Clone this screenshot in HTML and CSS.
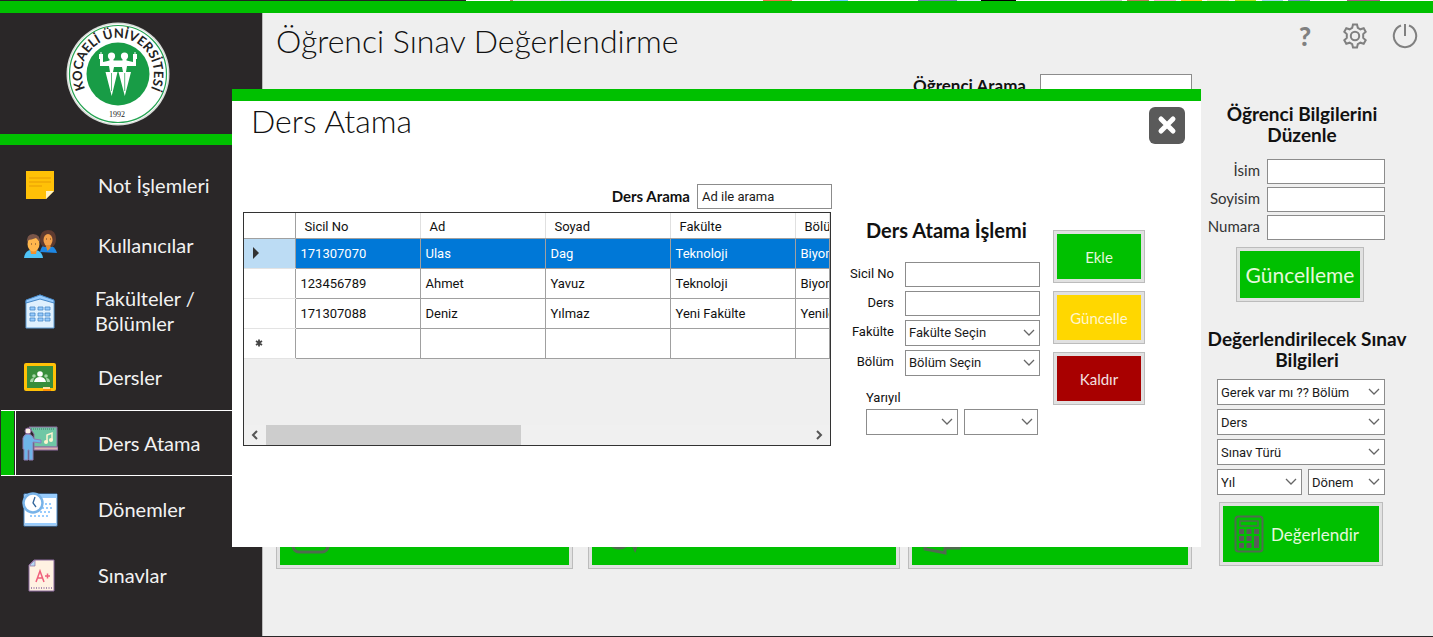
FILE: index.html
```html
<!DOCTYPE html>
<html lang="tr">
<head>
<meta charset="utf-8">
<title>Öğrenci Sınav Değerlendirme</title>
<link rel="stylesheet" href="styles.css">
</head>
<body>
<div class="desktop-edge"></div>
<div class="top-bar"></div>
<div class="app">
  <aside class="sidebar">
    <div class="brand">
      <svg class="logo" viewBox="0 0 104 104" role="img" aria-label="Kocaeli Üniversitesi">
        <defs><path id="ring" d="M22.500 72.500A36 36 0 1 1 81.500 72.500"/></defs>
        <circle cx="52" cy="52" r="51.500" fill="#d9ddd9"/>
        <circle cx="52" cy="52" r="50" fill="#fff"/>
        <circle cx="52" cy="52" r="48.500" fill="none" stroke="#25a352" stroke-width="1.200"/>
        <circle cx="52" cy="52" r="31.500" fill="#189c46"/>
        <text class="logo-name"><textPath href="#ring" startOffset="50%" text-anchor="middle">KOCAELİ ÜNİVERSİTESİ</textPath></text>
        <text class="logo-year" x="51" y="95" text-anchor="middle">1992</text>
        <g fill="#fff">
          <circle cx="45.500" cy="34" r="3.600"/><circle cx="58.500" cy="34" r="3.600"/>
          <path d="M34 36h3v4q4-1 6.500-1.500V36h4v2.500h9V36h4v2.500L67 40v-4h3v8h-9l-1 6h-3l-1-5h-8l-1 5h-3l-1-6H34z"/>
          <path d="M39.500 50h12l-5.800 24zM52.500 50H65l-6.200 24z"/>
          <path d="M33 32h4v5h-4zM67 32h4v5h-4zM34.500 30h1v3h-1zM68.500 30h1v3h-1z"/>
        </g>
        <path d="M45.500 51v18M58.700 51v18" stroke="#189c46" stroke-width=".7"/>
      </svg>
    </div>
    <nav class="menu">
      <a class="item first" href="#"><svg class="icon" viewBox="0 0 36 36"><path d="M4 4h28v20l-8 8H4z" fill="#ffc107"/><path d="M7 11h22M7 15h22M7 19h13" stroke="#e89b05" stroke-width="1.200"/><path d="M24 24h8l-8 8z" fill="#fff3c4"/></svg><span>Not İşlemleri</span></a>
      <a class="item" href="#"><svg class="icon" viewBox="0 0 36 36"><path d="M18 25q1-6 5-7h4q6 1 8 8z" fill="#1e88e5"/><path d="M18 13Q18 3 26 3t8 9q0 6-4 8h-8q-4-2-4-7z" fill="#5d3a30"/><ellipse cx="26" cy="13" rx="4.500" ry="6" fill="#f2a04b"/><path d="M23.500 18h5v3l-3 3z" fill="#e08c35"/><path d="M2 31q1-7 6-8h6q6 1 7 8z" fill="#4fc3f7"/><path d="M8 22h7l-1 5h-5z" fill="#f2912d"/><ellipse cx="11.500" cy="17" rx="6" ry="7.500" fill="#ffb74d"/><path d="M5 17q-1-10 6-10 8 0 7 10-1-4-4-6-5 2-8 2z" fill="#795548"/><path d="M9 17h1M13 17h1M24 12h1M28 12h1" stroke="#614030"/></svg><span>Kullanıcılar</span></a>
      <a class="item two-line" href="#"><svg class="icon" viewBox="0 0 36 36"><path d="M4 8l14-6 14 6v27H4z" fill="#dff0fe" stroke="#5e9ed6"/><path d="M4 7l14-5 14 5v3L18 6 4 10z" fill="#98ccfd" stroke="#4788c7"/><path d="M8 14h5v3H8zM16 14h5v3h-5zM23 14h5v3h-5zM8 20h5v3H8zM16 20h5v3h-5zM23 20h5v3h-5zM8 25h5v3H8zM16 25h5v3h-5zM23 25h5v3h-5z" fill="#98ccfd" stroke="#4788c7" stroke-width=".8"/></svg><span>Fakülteler /<br>Bölümler</span></a>
      <a class="item" href="#"><svg class="icon" viewBox="0 0 36 36"><rect x="2" y="4" width="32" height="28" rx="2" fill="#ffc107"/><path d="M5 7h26v22H5z" fill="#388e3c"/><circle cx="18" cy="15" r="2.800" fill="#fff"/><path d="M12 23q1-5 6-5t6 5z" fill="#fff"/><circle cx="12" cy="17" r="1.800" fill="#a5d6a7"/><circle cx="24" cy="17" r="1.800" fill="#a5d6a7"/><path d="M8 23q0-4 4-4l-1 4zM28 23q0-4-4-4l1 4z" fill="#a5d6a7"/><path d="M21 28h7v2h-7z" fill="#ffe0a0"/><path d="M21 30h8v2h-8z" fill="#ff8f00"/></svg><span>Dersler</span></a>
      <a class="item active" href="#"><svg class="icon" viewBox="0 0 36 36"><path d="M7 2h28v20H12V9z" fill="#6fc7a5" stroke="#8d6c9f"/><path d="M9 4h24" stroke="#42756b" stroke-dasharray="1 1"/><path d="M12 22h24v3H12z" fill="#dbb1b1" stroke="#8d6c9f"/><path d="M25 17v-7l5-2v7" fill="none" stroke="#fff5d0" stroke-width="1.500"/><circle cx="24" cy="17" r="2" fill="#fff5d0"/><circle cx="29" cy="15" r="2" fill="#fff5d0"/><circle cx="6" cy="6" r="3" fill="#fdf1e5" stroke="#8d6c9f"/><path d="M1 13q1-4 5-4 4 0 6 5l7 1v3l-8-1v18H7V25H6v10H2V24H1z" fill="#6eb5e8" stroke="#8d7fb5"/></svg><span>Ders Atama</span></a>
      <a class="item" href="#"><svg class="icon" viewBox="0 0 36 36"><path d="M2 3h33v32H2z" fill="#fff" stroke="#4788c7"/><path d="M3 3h32v4H3zM3 32h31v2H3z" fill="#98ccfd"/><path d="M8 25h18M18 21h12M20 17h10M23 13h7" stroke="#98ccfd" stroke-width="2" stroke-dasharray="2 2"/><circle cx="11" cy="12" r="9.500" fill="#fff" stroke="#78b3e8" stroke-width="2.500"/><path d="M13 6l-2 6 3 4" fill="none" stroke="#31659a" stroke-width="1.300"/></svg><span>Dönemler</span></a>
      <a class="item" href="#"><svg class="icon" viewBox="0 0 36 36"><path d="M12 3h20v31H7V8z" fill="#fff2e2" stroke="#8d6c9f"/><path d="M8 8l5-5v6H8z" fill="#b5d8f2" stroke="#8d6c9f" stroke-width=".7"/><path d="M14 25l4-11 4 11M15 21h6M23 19h5M25.500 16.500v5" fill="none" stroke="#f0607c" stroke-width="1.500"/><path d="M9 31h22" stroke="#8d6c9f" stroke-width="1.500" stroke-dasharray="1 1.500"/></svg><span>Sınavlar</span></a>
    </nav>
  </aside>

  <main class="main">
    <header class="page-head">
      <h1 class="title">Öğrenci Sınav Değerlendirme</h1>
      <div class="tools">
        <button class="tool help" type="button">?</button>
        <button class="tool" type="button" aria-label="Ayarlar"><svg viewBox="0 0 26 26"><path d="M11 1.500h4l.8 3.300 2.600 1.500 3.300-1 2 3.500-2.500 2.300v3.800l2.500 2.300-2 3.500-3.300-1-2.600 1.500-.8 3.300h-4l-.8-3.300-2.600-1.500-3.300 1-2-3.500 2.500-2.300v-3.800L2.300 8.800l2-3.500 3.300 1 2.600-1.500z"/><circle cx="13" cy="13" r="4.200"/></svg></button>
        <button class="tool" type="button" aria-label="Çıkış"><svg viewBox="0 0 26 26"><path d="M9 2.500a11.200 11.200 0 1 0 8 0M13 1v12"/></svg></button>
      </div>
    </header>
    <div class="page-body">
      <section class="students">
        <div class="student-search">
          <label for="ogrenci-arama">Öğrenci Arama</label>
          <input class="field" id="ogrenci-arama" type="text">
        </div>
        <div class="actions">
          <button class="btn action a1" type="button" aria-label="Seç"><svg viewBox="0 0 44 44"><rect x="4" y="2" width="35" height="35" rx="6"/><path d="M12 20l7 10 14-20"/></svg></button>
          <button class="btn action a2" type="button" aria-label="Bul"><svg viewBox="0 0 44 44"><circle cx="18" cy="21" r="12"/><path d="M31 28l3 6 2-6"/></svg></button>
          <button class="btn action a3" type="button" aria-label="Aktar"><svg viewBox="0 0 44 44"><path d="M4 3l20-4v39L4 34zM24 3h14v30H24"/></svg></button>
        </div>
      </section>
      <aside class="panels">
        <form class="panel">
          <h2>Öğrenci Bilgilerini Düzenle</h2>
          <div class="student-form">
            <label for="isim">İsim</label><input class="field" id="isim" type="text">
            <label for="soyisim">Soyisim</label><input class="field" id="soyisim" type="text">
            <label for="numara">Numara</label><input class="field" id="numara" type="text">
          </div>
          <button class="btn update" type="button">Güncelleme</button>
        </form>
        <form class="panel exam">
          <h2>Değerlendirilecek Sınav Bilgileri</h2>
          <div class="exam-form">
            <select class="field wide" aria-label="Bölüm"><option>Gerek var mı ?? Bölüm</option></select>
            <select class="field wide" aria-label="Ders"><option>Ders</option></select>
            <select class="field wide" aria-label="Sınav Türü"><option>Sınav Türü</option></select>
            <select class="field" aria-label="Yıl"><option>Yıl</option></select>
            <select class="field" aria-label="Dönem"><option>Dönem</option></select>
          </div>
          <button class="btn evaluate" type="button"><svg viewBox="0 0 30 38"><rect x="1.500" y="1.500" width="27" height="35" rx="3" fill="none" stroke="#4f6b4f" stroke-width="2"/><rect x="6" y="6" width="18" height="5" fill="none" stroke="#4f6b4f" stroke-width="1.500"/><path d="M5 14h5v5H5zM12.500 14h5v5h-5zM20 14h5v5h-5zM5 21h5v5H5zM12.500 21h5v5h-5zM5 28h5v5H5zM12.500 28h5v5h-5zM20 21h5v12h-5z" fill="#5a5a5a"/></svg>Değerlendir</button>
        </form>
      </aside>
    </div>
  </main>
</div>

<section class="dialog" role="dialog" aria-labelledby="dialog-title">
  <header class="dialog-head">
    <h2 class="title" id="dialog-title">Ders Atama</h2>
    <button class="close" type="button" aria-label="Kapat"><svg viewBox="0 0 38 38"><rect x="1" y="1" width="36" height="37" rx="6" fill="#5a5a5a"/><path d="M13 13l12 12M25 13L13 25" stroke="#fff" stroke-width="5" stroke-linecap="round"/></svg></button>
  </header>
  <div class="dialog-body">
    <div class="courses">
      <div class="course-search">
        <label for="ders-arama">Ders Arama</label>
        <input class="field" id="ders-arama" type="text" value="Ad ile arama">
      </div>
      <div class="grid">
        <div class="grid-view">
          <table>
            <colgroup><col class="mark-col"><col class="data-col"><col class="data-col"><col class="data-col"><col class="data-col"><col></colgroup>
            <thead><tr><th></th><th>Sicil No</th><th>Ad</th><th>Soyad</th><th>Fakülte</th><th>Bölüm</th></tr></thead>
            <tbody>
              <tr class="selected"><th><svg viewBox="0 0 8 12"><path d="M1 0l6 6-6 6z"/></svg></th><td>171307070</td><td>Ulas</td><td>Dag</td><td>Teknoloji</td><td>Biyomedikal</td></tr>
              <tr><th></th><td>123456789</td><td>Ahmet</td><td>Yavuz</td><td>Teknoloji</td><td>Biyomedikal</td></tr>
              <tr><th></th><td>171307088</td><td>Deniz</td><td>Yılmaz</td><td>Yeni Fakülte</td><td>Yenilenebilir</td></tr>
              <tr><th><svg class="new-mark" viewBox="0 0 8 12"><path d="M4 2.500v7M1 4l6 4M7 4L1 8" stroke="#444" stroke-width="1.800"/></svg></th><td></td><td></td><td></td><td></td><td></td></tr>
            </tbody>
          </table>
        </div>
        <div class="scrollbar">
          <svg viewBox="0 0 22 20"><path d="M13 6l-4 4 4 4"/></svg>
          <div class="track"><div class="thumb"></div></div>
          <svg viewBox="0 0 22 20"><path d="M9 6l4 4-4 4"/></svg>
        </div>
      </div>
    </div>
    <form class="assign">
      <h3>Ders Atama İşlemi</h3>
      <div class="assign-form">
        <label for="sicil">Sicil No</label><input class="field" id="sicil" type="text">
        <label for="ders">Ders</label><input class="field" id="ders" type="text">
        <label for="fakulte">Fakülte</label><select class="field" id="fakulte"><option>Fakülte Seçin</option></select>
        <label for="bolum">Bölüm</label><select class="field" id="bolum"><option>Bölüm Seçin</option></select>
      </div>
      <div class="term">
        <label for="yil">Yarıyıl</label>
        <select class="field" id="yil"><option></option></select>
        <select class="field" aria-label="Dönem"><option></option></select>
      </div>
    </form>
    <div class="dialog-actions">
      <button class="btn" type="button">Ekle</button>
      <button class="btn yellow" type="button">Güncelle</button>
      <button class="btn red" type="button">Kaldır</button>
    </div>
  </div>
</section>
</body>
</html>
```
FILE: styles.css
```css
* { box-sizing: border-box; }

:root {
  --green: #00c000;
  --dark: #2a2728;
  --gothic: "Century Gothic", Lato, "Open Sans", sans-serif;
  --ui: Roboto, "Liberation Sans", sans-serif;
}

body {
  margin: 0;
  min-height: 100vh;
  display: flex;
  flex-direction: column;
  position: relative;
  background: #efefef;
  border-bottom: 1px solid var(--dark);
  color: #111;
  font-family: var(--gothic);
}

h1, h2, h3 { margin: 0; }
button, input, select { font: inherit; }

.desktop-edge {
  height: 1px;
  background: linear-gradient(90deg, #222 0 466px, #fff 466px 510px, #b98a5c 510px 513px, #e8e8e8 513px 561px, #cfe4f7 561px 610px, #fff 610px 763px, #ee7044 763px 792px, #fff 792px 830px, #6cf 830px 848px, #fff 848px 918px, #6f80b4 918px 957px, #d9ecff 957px 981px, #000 981px 1016px, #fff 1016px 1100px, #c3c3c3 1100px 1122px, #fff 1122px 1127px, #b97a57 1127px 1149px, #fff 1149px 1154px, #ffaec9 1154px 1176px, #fff 1176px 1181px, #ffc90e 1181px 1202px, #fff 1202px 1207px, #efe4b0 1207px 1229px, #fff 1229px 1235px, #b5e61d 1235px 1256px, #fff 1256px 1262px, #99d9ea 1262px 1283px, #fff 1283px 1288px, #7092be 1288px 1310px, #fff 1310px 1347px, #a55a7c 1347px 1380px, #fff 1380px);
}

.top-bar { height: 12px; background: var(--green); }

.app { flex: 1; display: flex; }

/* Sidebar */
.sidebar {
  width: 263px;
  flex: none;
  background: var(--dark);
  border-right: 1px solid #bbb;
}

.brand {
  padding: 9px 0 8px 66px;
  border-bottom: 11px solid var(--green);
}

.logo { display: block; width: 104px; height: 104px; }
.logo-name { font: 700 13px Lato, sans-serif; fill: #222; }
.logo-year { font: 8px "Liberation Serif", serif; fill: #222; }

.menu { padding-top: 13px; }

.item {
  display: flex;
  align-items: center;
  gap: 40px;
  height: 66px;
  padding-left: 22px;
  color: #f2f2f2;
  font-size: 20px;
  line-height: 25px;
  text-decoration: none;
}

.item.first { height: 54px; }
.item.two-line { gap: 37px; }

.item.active {
  margin-left: 1px;
  padding-left: 21px;
  border: 1px solid #fff;
  border-left: 0;
  box-shadow: inset 13px 0 var(--green), inset 14px 0 var(--dark), inset 15px 0 #fff;
}

.icon { width: 36px; height: 36px; flex: none; }

/* Main page */
.main {
  flex: 1;
  min-width: 0;
  display: flex;
  flex-direction: column;
}

.page-head {
  display: flex;
  justify-content: space-between;
  padding: 8px 15px 0 13px;
}

.title {
  font-size: 32px;
  font-weight: 300;
  line-height: 40px;
}

.tools { display: flex; gap: 24px; }

.tool {
  width: 26px;
  height: 30px;
  padding: 2px 0;
  border: 0;
  background: none;
  color: #808080;
}

.tool.help { font-size: 26px; font-weight: 900; line-height: 26px; }
.tool svg { display: block; width: 26px; height: 26px; fill: none; stroke: #808080; stroke-width: 2; }

.page-body { flex: 1; display: flex; }

.students {
  flex: 1;
  display: flex;
  flex-direction: column;
  justify-content: space-between;
  padding: 13px 11px 67px 13px;
}

.student-search {
  display: flex;
  justify-content: flex-end;
  gap: 14px;
  font-size: 17px;
  font-weight: 700;
  line-height: 24px;
}

.student-search .field { width: 152px; }

.field {
  height: 25px;
  min-width: 0;
  padding: 0 4px;
  border: 1px solid #8c8c8c;
  border-radius: 0;
  background-color: #fff;
  color: #1a1a1a;
  font-family: var(--ui);
  font-size: 13px;
  font-weight: 400;
}

select.field {
  height: 26px;
  padding: 0 3px;
  appearance: none;
  background: #fff url("data:image/svg+xml,%3Csvg xmlns='http://www.w3.org/2000/svg' width='12' height='8'%3E%3Cpath d='M1 1l5 5 5-5' fill='none' stroke='%23666' stroke-width='1.300'/%3E%3C/svg%3E") no-repeat right 4px center;
}

.btn {
  padding: 0;
  border: 1px solid #bcbcbc;
  background: var(--green);
  box-shadow: inset 0 0 0 3px #e1e1e1;
  color: #e4f8dc;
}

.actions { display: flex; }
.action { height: 64px; padding: 0 12px; display: flex; align-items: center; }
.action svg { width: 44px; height: 44px; fill: none; stroke: #4f6b4f; stroke-width: 3; overflow: visible; }
.a1 { flex: 296; margin-right: 15px; }
.a2 { flex: 313; margin-right: 8px; }
.a3 { flex: 282; }

.panels { width: 230px; flex: none; padding-top: 42px; }

.panel { display: flex; flex-direction: column; }

.panel h2 {
  width: 208px;
  font-size: 19px;
  line-height: 21px;
  text-align: center;
}

.panel:first-child h2 { width: 170px; margin-left: 14px; }

.student-form {
  display: grid;
  grid-template-columns: 57px 118px;
  gap: 3px 7px;
  margin-top: 14px;
  font-size: 15px;
  line-height: 22px;
  color: #333;
}

.student-form label { text-align: right; }

.update {
  width: 128px;
  height: 55px;
  margin: 7px 0 0 33px;
  font-size: 21px;
}

.exam { margin-top: 26px; }

.exam-form {
  display: grid;
  grid-template-columns: 85px 77px;
  gap: 4px 6px;
  margin: 9px 0 0 14px;
}

.wide { grid-column: 1 / -1; }

.evaluate {
  display: flex;
  align-items: center;
  gap: 7px;
  width: 164px;
  height: 64px;
  margin: 7px 0 0 16px;
  padding-left: 14px;
  font-size: 17px;
}

.evaluate svg { width: 30px; height: 38px; }

/* Course assignment dialog */
.dialog {
  position: absolute;
  top: 89px;
  left: 232px;
  right: 232px;
  padding-bottom: 101px;
  border-top: 12px solid var(--green);
  background: #fff;
}

.dialog-head {
  display: flex;
  justify-content: space-between;
  padding: 0 15px 0 19px;
}

.close { width: 38px; height: 38px; margin-top: 5px; padding: 0; border: 0; background: none; }
.close svg { display: block; }

.dialog-body {
  display: flex;
  align-items: flex-start;
  padding: 40px 0 0 11px;
}

.courses { width: 589px; flex: none; }

.course-search {
  display: flex;
  justify-content: flex-end;
  gap: 7px;
  font-size: 15px;
  font-weight: 700;
  line-height: 25px;
}

.course-search .field { width: 135px; }

.grid {
  width: 588px;
  margin-top: 3px;
  border: 1px solid #333;
  background: #efefef;
}

.grid-view { height: 212px; overflow: hidden; }

table {
  width: 100%;
  table-layout: fixed;
  border-collapse: collapse;
  background: #fff;
  font-family: var(--ui);
  font-size: 13px;
}

.mark-col { width: 51px; }
.data-col { width: 125px; }

th, td {
  height: 30px;
  padding: 0 5px;
  overflow: hidden;
  font-weight: 400;
  text-align: left;
  white-space: nowrap;
}

th:last-child, td:last-child { padding-right: 0; }
td { border: 1px solid #a0a0a0; }
thead th { height: 25px; padding: 2px 9px 0; border-right: 1px solid #e0e0e0; border-bottom: 1px solid #a0a0a0; }
thead th:first-child { border-right-color: #a0a0a0; }
tbody th { border-bottom: 1px solid #e3e3e3; }
th svg { display: block; width: 8px; height: 12px; margin-left: 3px; fill: #333; }
th .new-mark { margin-left: 6px; }
.selected th { background: #bcdcf4; }
.selected td { background: #0078d7; color: #fff; }

.scrollbar { display: flex; height: 20px; background: #f0f0f0; }
.scrollbar svg { width: 22px; height: 20px; fill: none; stroke: #555; stroke-width: 2; }
.track { flex: 1; }
.thumb { width: 47%; height: 100%; background: #cdcdcd; }

.assign { width: 196px; margin: 34px 0 0 12px; font-family: var(--ui); font-size: 13px; }

.assign h3 {
  margin-left: 22px;
  font-family: var(--gothic);
  font-size: 20px;
  line-height: 24px;
  white-space: nowrap;
}

.assign-form {
  display: grid;
  grid-template-columns: 50px 135px;
  gap: 4px 11px;
  margin-top: 20px;
  line-height: 24px;
}

.assign-form label { text-align: right; white-space: nowrap; }

.term {
  display: grid;
  grid-template-columns: 92px 74px;
  gap: 0 6px;
  margin: 11px 0 0 22px;
  line-height: 22px;
}

.term label { grid-column: 1 / -1; }

.dialog-actions { display: grid; gap: 8px; margin: 46px 0 0 13px; }

.dialog-actions .btn { width: 92px; height: 53px; font-size: 15px; }
.btn.yellow { background: #ffd700; color: #fff6cc; }
.btn.red { background: #a80000; color: #f4e0e0; }
```
